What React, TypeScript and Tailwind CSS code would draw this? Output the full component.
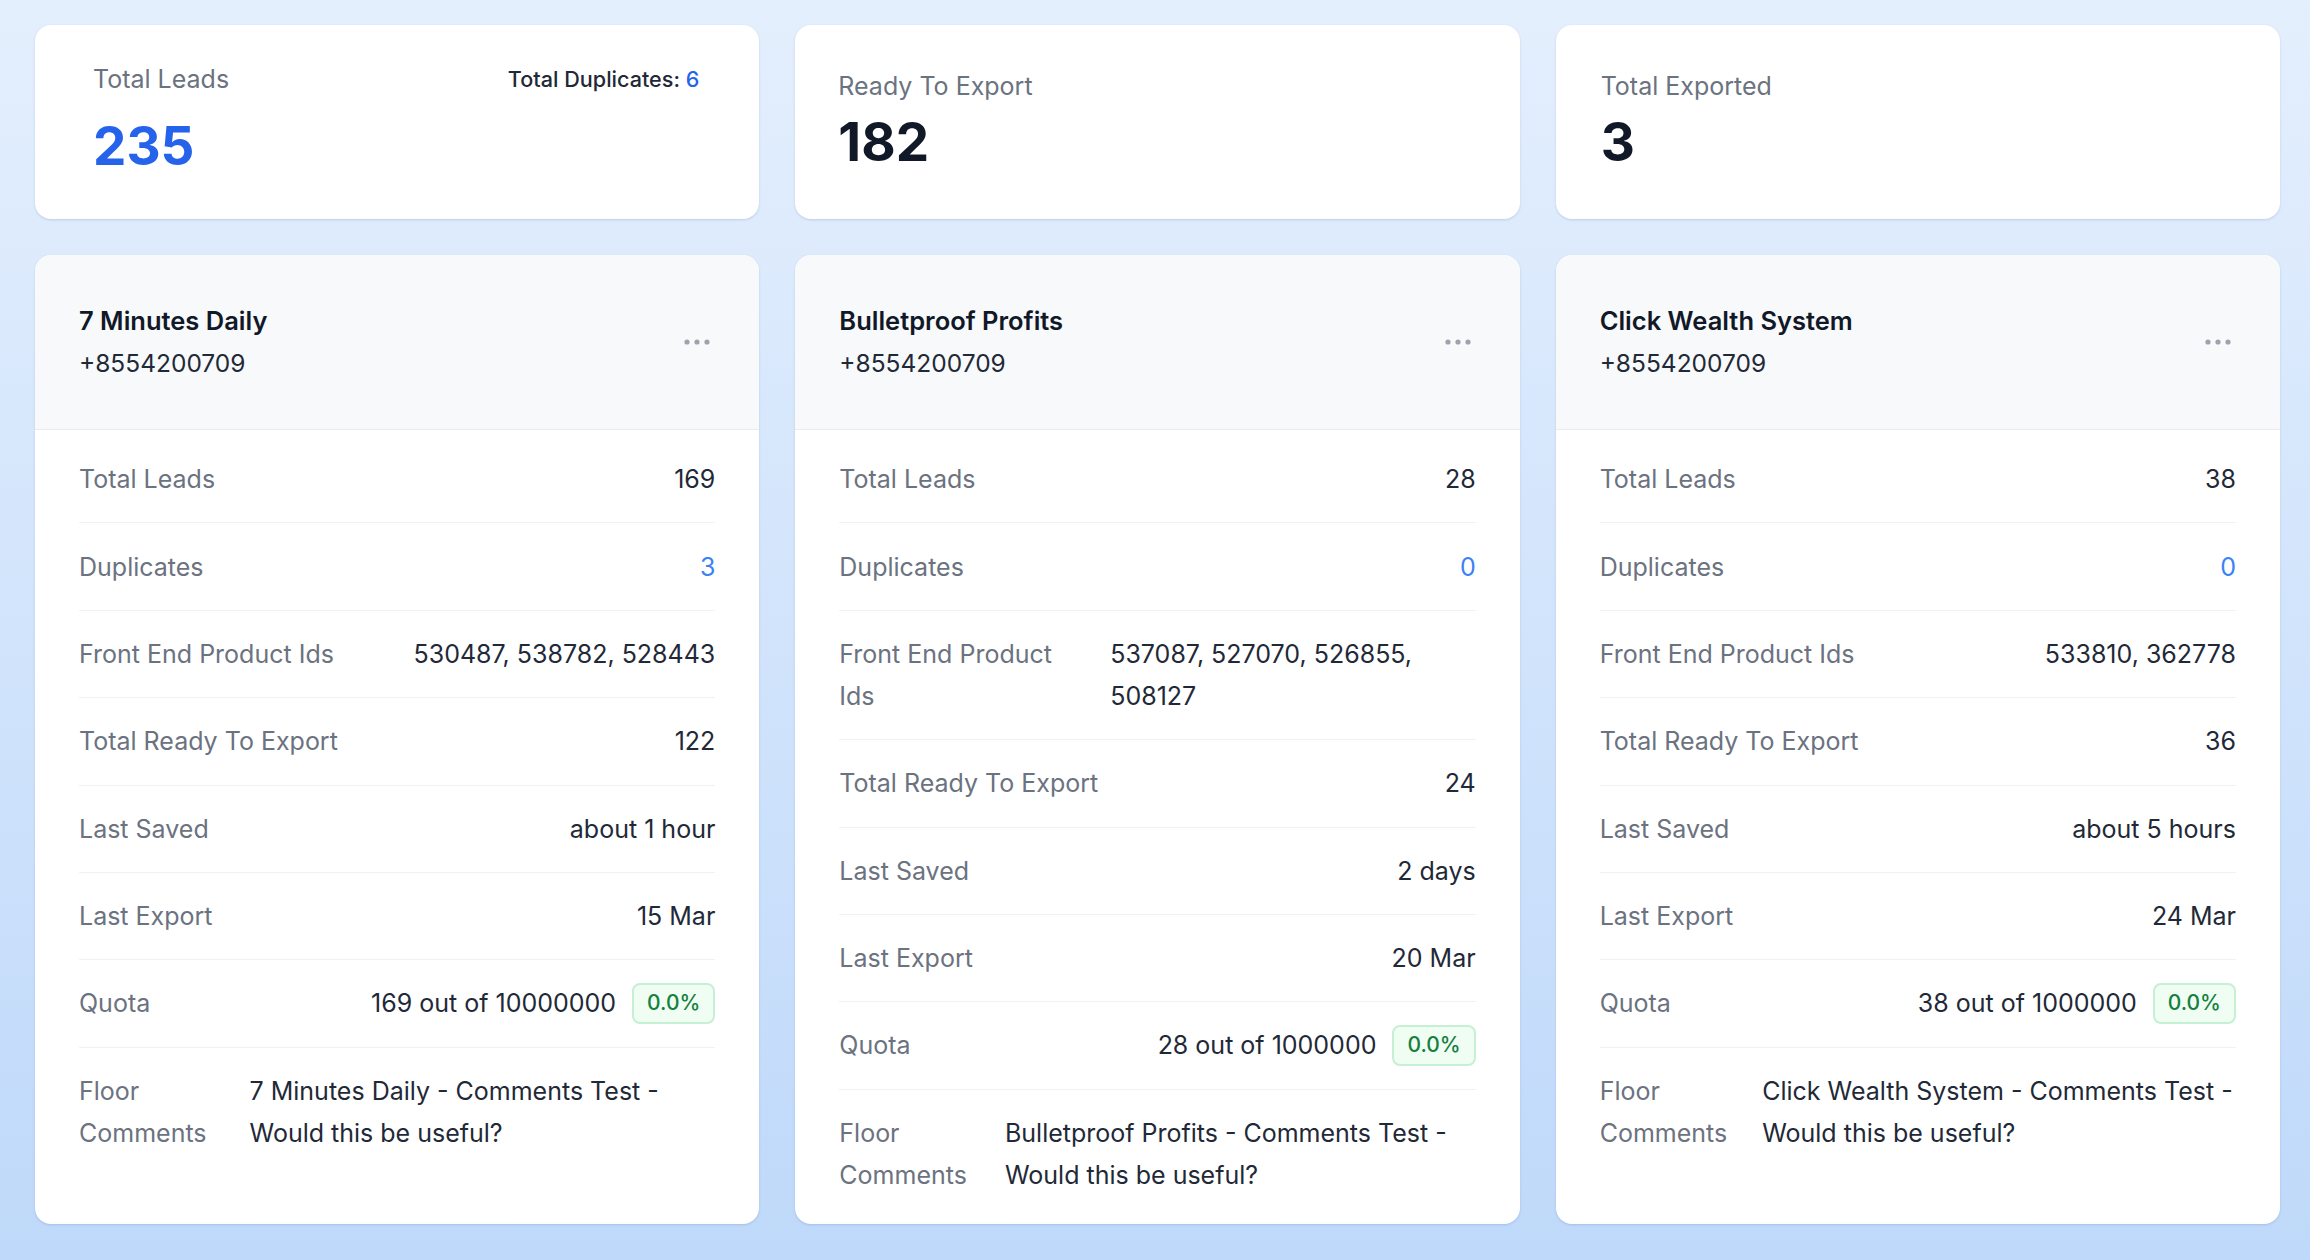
import React from "react";

type Campaign = {
  name: string;
  phone: string;
  totalLeads: string;
  duplicates: string;
  productIds: string;
  ready: string;
  lastSaved: string;
  lastExport: string;
  quota: string;
  pct: string;
  comments: string;
};

const campaigns: Campaign[] = [
  {
    name: "7 Minutes Daily",
    phone: "+8554200709",
    totalLeads: "169",
    duplicates: "3",
    productIds: "530487, 538782, 528443",
    ready: "122",
    lastSaved: "about 1 hour",
    lastExport: "15 Mar",
    quota: "169 out of 10000000",
    pct: "0.0%",
    comments: "7 Minutes Daily - Comments Test - Would this be useful?",
  },
  {
    name: "Bulletproof Profits",
    phone: "+8554200709",
    totalLeads: "28",
    duplicates: "0",
    productIds: "537087, 527070, 526855, 508127",
    ready: "24",
    lastSaved: "2 days",
    lastExport: "20 Mar",
    quota: "28 out of 1000000",
    pct: "0.0%",
    comments: "Bulletproof Profits - Comments Test - Would this be useful?",
  },
  {
    name: "Click Wealth System",
    phone: "+8554200709",
    totalLeads: "38",
    duplicates: "0",
    productIds: "533810, 362778",
    ready: "36",
    lastSaved: "about 5 hours",
    lastExport: "24 Mar",
    quota: "38 out of 1000000",
    pct: "0.0%",
    comments: "Click Wealth System - Comments Test - Would this be useful?",
  },
];

const cardCls =
  "bg-white rounded-[16px] shadow-[0_1px_3px_rgba(30,58,138,0.10),0_1px_2px_rgba(30,58,138,0.06)] overflow-hidden";

function Dots() {
  return (
    <svg width="28" height="8" viewBox="0 0 28 8" className="shrink-0">
      <circle cx="4" cy="4" r="2.6" fill="#9ca3af" />
      <circle cx="14" cy="4" r="2.6" fill="#9ca3af" />
      <circle cx="24" cy="4" r="2.6" fill="#9ca3af" />
    </svg>
  );
}

function Row({
  label,
  children,
  last,
}: {
  label: string;
  children: React.ReactNode;
  last?: boolean;
}) {
  return (
    <div
      className={
        "flex justify-between gap-[35px] py-[22.2px] " +
        (last ? "" : "border-b border-[#eff1f4]")
      }
    >
      <div className="text-[#6b7280]">{label}</div>
      <div className="text-[#1f2937] text-left">{children}</div>
    </div>
  );
}

function CampaignCard({ c }: { c: Campaign }) {
  return (
    <div className={cardCls + " flex flex-col"}>
      <div className="bg-[#f8f9fb] border-b border-[#e9ebef] px-[44px] py-[44px] flex items-center justify-between">
        <div className="leading-[43px]">
          <div className="font-semibold text-[25.5px] text-[#111827]">{c.name}</div>
          <div className="text-[24.5px] text-[#1f2937]">{c.phone}</div>
        </div>
        <div className="mr-[4px]">
          <Dots />
        </div>
      </div>
      <div className="px-[44px] py-[6px] flex-1">
        <Row label="Total Leads">{c.totalLeads}</Row>
        <Row label="Duplicates">
          <span className="text-[#3b82f6]">{c.duplicates}</span>
        </Row>
        <Row label="Front End Product Ids">{c.productIds}</Row>
        <Row label="Total Ready To Export">{c.ready}</Row>
        <Row label="Last Saved">{c.lastSaved}</Row>
        <Row label="Last Export">{c.lastExport}</Row>
        <Row label="Quota">
          <div className="flex items-center gap-[16px]">
            <span className="whitespace-nowrap">{c.quota}</span>
            <span className="h-[41px] px-[13px] flex items-center rounded-[8px] border-2 border-[#c6f0d3] bg-[#effdf3] text-[#15803d] font-medium text-[21px]">
              {c.pct}
            </span>
          </div>
        </Row>
        <Row label="Floor Comments" last>
          {c.comments}
        </Row>
      </div>
    </div>
  );
}

export default function App() {
  return (
    <div
      className="min-h-[1260px] w-full bg-gradient-to-b from-[#e4effd] to-[#bfd9fa] pl-[35px] pr-[30px] pt-[25px] pb-[33px] text-[25px] leading-[42px]"
      style={{ fontFamily: "Inter, 'Noto Sans', sans-serif" }}
    >
      <div className="grid grid-cols-3 gap-[36px]">
        <div className={cardCls + " h-[194px] pt-[37px] pl-[58px] pr-[60px]"}>
          <div className="flex items-center justify-between leading-[35px]">
            <span className="text-[#6b7280]">Total Leads</span>
            <span className="text-[21.6px] font-medium text-[#1f2937]">
              Total Duplicates: <span className="text-[#2563eb]">6</span>
            </span>
          </div>
          <div className="mt-[20px] text-[53px] leading-[59px] font-bold text-[#2563eb]">
            235
          </div>
        </div>
        <div className={cardCls + " h-[194px] pt-[44px] px-[43px]"}>
          <div className="leading-[35px] text-[#6b7280]">Ready To Export</div>
          <div className="mt-[9px] text-[53px] leading-[59px] font-bold text-[#111827]">
            182
          </div>
        </div>
        <div className={cardCls + " h-[194px] pt-[44px] px-[45px]"}>
          <div className="leading-[35px] text-[#6b7280]">Total Exported</div>
          <div className="mt-[9px] text-[53px] leading-[59px] font-bold text-[#111827]">
            3
          </div>
        </div>
      </div>
      <div className="grid grid-cols-3 gap-[36px] mt-[36px]">
        {campaigns.map((c) => (
          <CampaignCard key={c.name} c={c} />
        ))}
      </div>
    </div>
  );
}
